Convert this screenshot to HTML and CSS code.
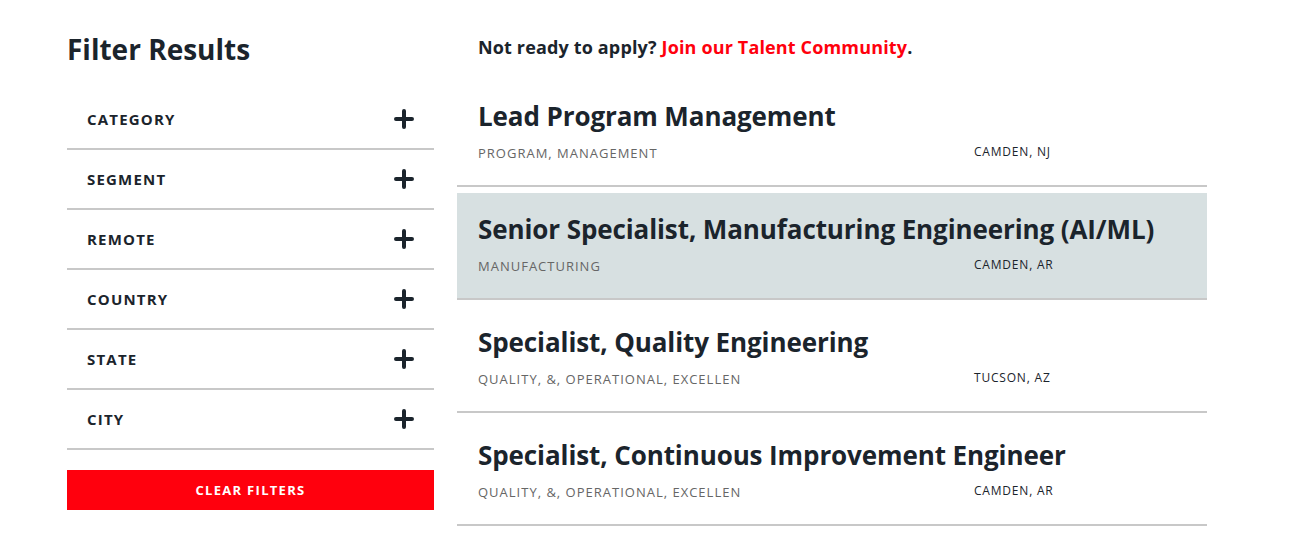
FILE: index.html
```html
<!DOCTYPE html>
<html lang="en">
<head>
<meta charset="utf-8">
<title>Job Search</title>
<link rel="stylesheet" href="styles.css">
</head>
<body>
<div class="page">
  <aside class="filters">
    <h2 class="filters-title">Filter Results</h2>
    <ul class="filter-list">
      <li class="filter-row"><span>Category</span><svg class="plus" viewBox="0 0 20 20"><path d="M10 2v16M2 10h16"/></svg></li>
      <li class="filter-row"><span>Segment</span><svg class="plus" viewBox="0 0 20 20"><path d="M10 2v16M2 10h16"/></svg></li>
      <li class="filter-row"><span>Remote</span><svg class="plus" viewBox="0 0 20 20"><path d="M10 2v16M2 10h16"/></svg></li>
      <li class="filter-row"><span>Country</span><svg class="plus" viewBox="0 0 20 20"><path d="M10 2v16M2 10h16"/></svg></li>
      <li class="filter-row"><span>State</span><svg class="plus" viewBox="0 0 20 20"><path d="M10 2v16M2 10h16"/></svg></li>
      <li class="filter-row"><span>City</span><svg class="plus" viewBox="0 0 20 20"><path d="M10 2v16M2 10h16"/></svg></li>
    </ul>
    <button class="clear-btn">Clear Filters</button>
  </aside>
  <main class="results">
    <p class="talent">Not ready to apply? <a href="#">Join our Talent Community</a>.</p>
    <ul class="job-list">
      <li class="job">
        <h3 class="job-title">Lead Program Management</h3>
        <div class="job-meta"><span class="job-cat">Program, Management</span><span class="job-loc">Camden, NJ</span></div>
      </li>
      <li class="job job-active">
        <h3 class="job-title">Senior Specialist, Manufacturing Engineering (AI/ML)</h3>
        <div class="job-meta"><span class="job-cat">Manufacturing</span><span class="job-loc">Camden, AR</span></div>
      </li>
      <li class="job">
        <h3 class="job-title">Specialist, Quality Engineering</h3>
        <div class="job-meta"><span class="job-cat">Quality, &amp;, Operational, Excellen</span><span class="job-loc">Tucson, AZ</span></div>
      </li>
      <li class="job">
        <h3 class="job-title">Specialist, Continuous Improvement Engineer</h3>
        <div class="job-meta"><span class="job-cat">Quality, &amp;, Operational, Excellen</span><span class="job-loc">Camden, AR</span></div>
      </li>
    </ul>
  </main>
</div>
</body>
</html>
```
FILE: styles.css
```css
* { box-sizing: border-box; }

body {
  margin: 0;
  background: #fff;
  color: #1b242c;
  font-family: "Open Sans", "Liberation Sans", sans-serif;
}

.page {
  display: flex;
  gap: 23px;
  padding: 0 0 0 67px;
}

/* sidebar */
.filters {
  width: 367px;
  flex: none;
  padding-top: 30px;
}

.filters-title {
  margin: 0;
  font-size: 28px;
  line-height: 38px;
  font-weight: 700;
}

.filter-list {
  list-style: none;
  margin: 22px 0 0;
  padding: 0 0 2px;
}

.filter-row {
  height: 60px;
  display: flex;
  align-items: center;
  justify-content: space-between;
  padding: 0 20px;
  border-bottom: 2px solid #c8c8c8;
  font-size: 15px;
  font-weight: 700;
  letter-spacing: 1.2px;
  text-transform: uppercase;
}

.plus {
  width: 20px;
  height: 20px;
  stroke: #1b242c;
  stroke-width: 4;
  stroke-linecap: round;
  fill: none;
}

.clear-btn {
  display: block;
  width: 100%;
  height: 40px;
  margin-top: 18px;
  border: 0;
  background: #ff000d;
  color: #fff;
  font-family: inherit;
  font-size: 13px;
  font-weight: 700;
  letter-spacing: 1.3px;
  text-transform: uppercase;
}

/* results */
.results {
  width: 750px;
  flex: none;
  padding-top: 35px;
}

.talent {
  margin: 0;
  padding-left: 21px;
  font-size: 18px;
  line-height: 25px;
  font-weight: 700;
  letter-spacing: 0.15px;
}

.talent a {
  color: #ff000d;
  text-decoration: none;
}

.job-list {
  list-style: none;
  margin: 20px 0 0;
  padding: 0;
}

.job {
  margin-top: 6px;
  height: 107px;
  padding: 19px 21px 0;
  border-bottom: 2px solid #c8c8c8;
}

.job-active {
  background: #d7e0e1;
}

.job-title {
  margin: 0;
  font-size: 26px;
  line-height: 34px;
  font-weight: 700;
  letter-spacing: -0.1px;
}

.job-meta {
  display: grid;
  grid-template-columns: 496px 1fr;
  align-items: start;
  margin-top: 12px;
}

.job-cat {
  font-size: 13px;
  line-height: 16px;
  letter-spacing: 1px;
  color: #666;
  text-transform: uppercase;
}

.job-loc {
  font-size: 12px;
  line-height: 14px;
  letter-spacing: 0.8px;
  font-weight: 500;
  text-transform: uppercase;
}
```
